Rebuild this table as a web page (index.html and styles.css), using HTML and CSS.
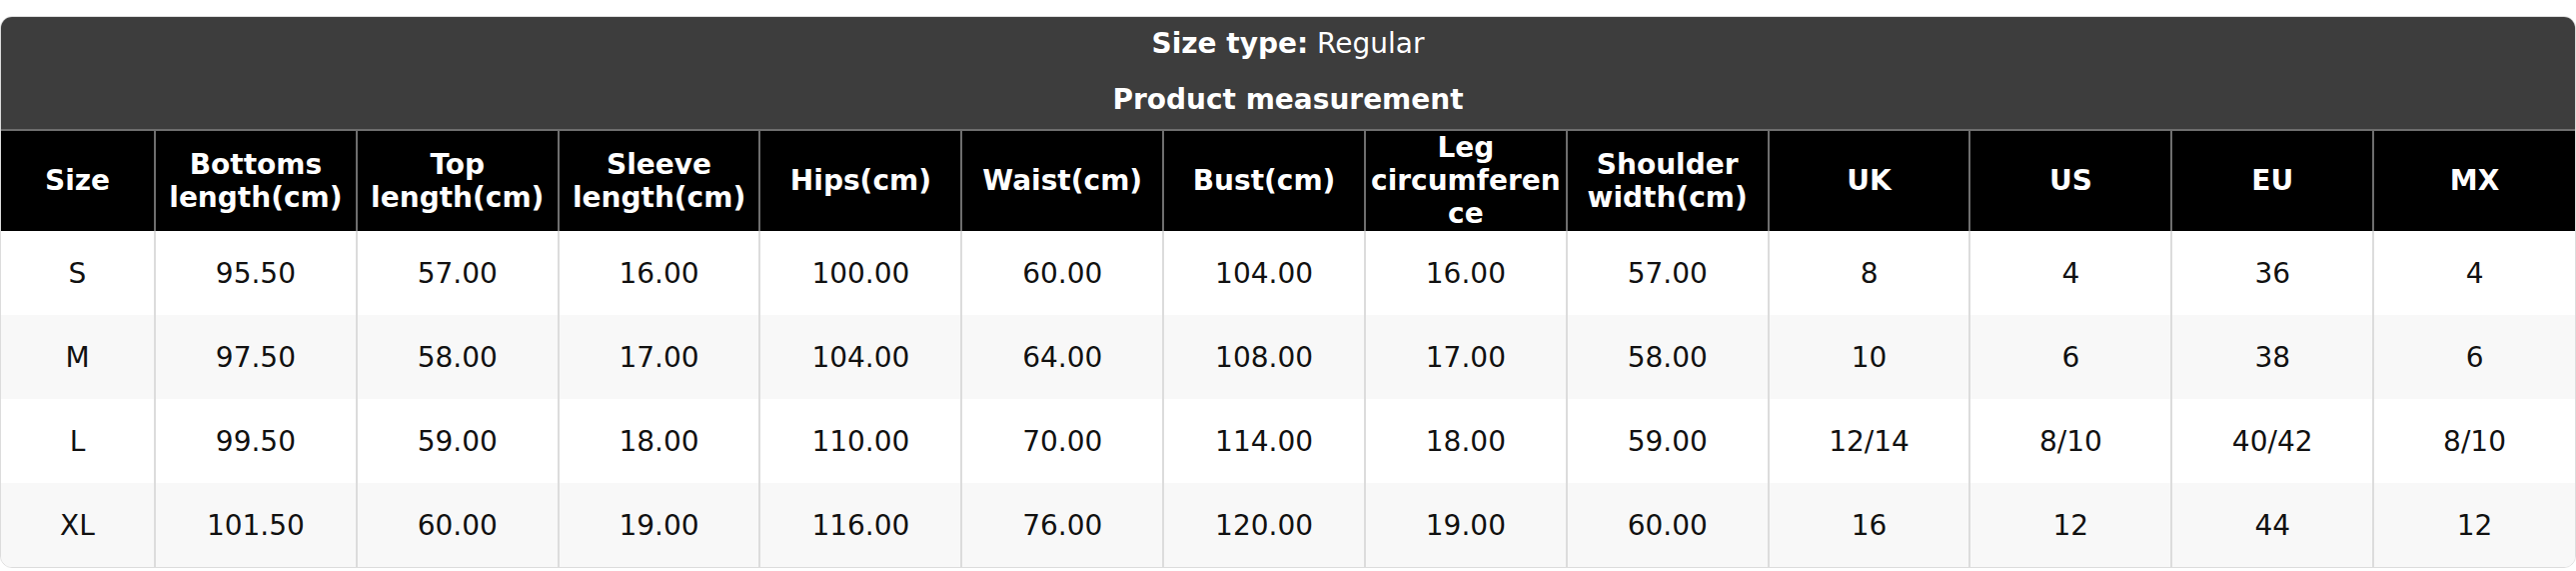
FILE: index.html
```html
<!DOCTYPE html>
<html lang="en">
<head>
<meta charset="utf-8">
<title>Size chart</title>
<link rel="stylesheet" href="styles.css">
</head>
<body>
<div class="card">
  <div class="title-bar">
    <div class="title-line"><strong>Size type:</strong> Regular</div>
    <div class="title-line"><strong>Product measurement</strong></div>
  </div>
  <table class="chart">
    <colgroup>
      <col class="col-size">
      <col><col><col><col><col><col><col><col><col><col><col><col>
    </colgroup>
    <thead>
      <tr>
        <th>Size</th>
        <th>Bottoms length(cm)</th>
        <th>Top length(cm)</th>
        <th>Sleeve length(cm)</th>
        <th>Hips(cm)</th>
        <th>Waist(cm)</th>
        <th>Bust(cm)</th>
        <th>Leg circumference</th>
        <th>Shoulder width(cm)</th>
        <th>UK</th>
        <th>US</th>
        <th>EU</th>
        <th>MX</th>
      </tr>
    </thead>
    <tbody>
      <tr><td>S</td><td>95.50</td><td>57.00</td><td>16.00</td><td>100.00</td><td>60.00</td><td>104.00</td><td>16.00</td><td>57.00</td><td>8</td><td>4</td><td>36</td><td>4</td></tr>
      <tr><td>M</td><td>97.50</td><td>58.00</td><td>17.00</td><td>104.00</td><td>64.00</td><td>108.00</td><td>17.00</td><td>58.00</td><td>10</td><td>6</td><td>38</td><td>6</td></tr>
      <tr><td>L</td><td>99.50</td><td>59.00</td><td>18.00</td><td>110.00</td><td>70.00</td><td>114.00</td><td>18.00</td><td>59.00</td><td>12/14</td><td>8/10</td><td>40/42</td><td>8/10</td></tr>
      <tr><td>XL</td><td>101.50</td><td>60.00</td><td>19.00</td><td>116.00</td><td>76.00</td><td>120.00</td><td>19.00</td><td>60.00</td><td>16</td><td>12</td><td>44</td><td>12</td></tr>
    </tbody>
  </table>
</div>
</body>
</html>
```
FILE: styles.css
```css
html, body {
  margin: 0;
  padding: 0;
  background: #ffffff;
}
body {
  padding-top: 16px;
  font-family: "DejaVu Sans", "Liberation Sans", sans-serif;
  font-size: 28px;
  color: #111;
}
.card {
  border: 1px solid #dcdcdc;
  border-radius: 12px;
  overflow: hidden;
  background: #fff;
}
.title-bar {
  background: #3d3d3d;
  color: #fff;
  text-align: center;
}
.title-line {
  height: 56px;
  line-height: 54px;
}
.title-line strong {
  font-weight: bold;
}
.chart {
  width: 100%;
  border-collapse: collapse;
  table-layout: fixed;
}
.col-size {
  width: 154px;
}
.chart th {
  background: #000;
  color: #fff;
  font-weight: bold;
  line-height: 33px;
  padding: 0 4px 1px;
  border: 2px solid #6e6e6e;
  border-bottom: none;
  text-align: center;
  vertical-align: middle;
  overflow-wrap: break-word;
  word-break: break-word;
}
.chart th:first-child {
  border-left: none;
}
.chart th:last-child {
  border-right: none;
}
.chart td {
  padding: 25.5px 4px;
  line-height: 33px;
  text-align: center;
  border-left: 2px solid #dcdcdc;
  color: #111;
}
.chart td:first-child {
  border-left: none;
}
.chart tbody tr:nth-child(even) td {
  background: #f8f8f8;
}
```
